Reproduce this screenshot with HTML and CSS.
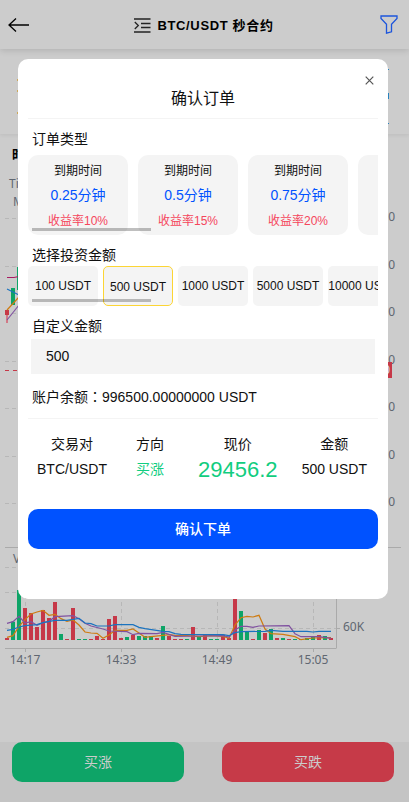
FILE: index.html
```html
<!DOCTYPE html>
<html lang="zh-CN">
<head>
<meta charset="utf-8">
<title>BTC/USDT 秒合约</title>
<link rel="stylesheet" href="styles.css">
</head>
<body>
<div class="page">
  <header class="topbar">
    <svg class="back" width="22" height="16" viewBox="0 0 22 16"><path d="M21 8H1M8 1.5 1 8l7 6.5"/></svg>
    <div class="pair">
      <svg class="list" width="17" height="15" viewBox="0 0 17 15"><path d="M0 1h16.500M7 5.500h9.500M7 9.500h9.500M0 14h16.500M.8 4l3.500 3.500L.8 11"/></svg>
      <h1>BTC/USDT 秒合约</h1>
    </div>
    <svg class="filter" width="18" height="19" viewBox="0 0 18 19"><path d="M1 1h16v2.500l-5.500 5.700v7.600l-5 1.400V9.200L1 3.500z"/></svg>
  </header>
  <section class="ticker">
    <svg width="409" height="84" viewBox="0 49 409 84"><path d="M17.500 79v2M17.500 90v2M17.500 112v2" stroke="#cda85a"/><path d="M388 69.500h1M388 123.500h1M388.500 93v6" stroke="#2781bd"/></svg>
  </section>
  <main class="chart">
    <svg width="409" height="608" viewBox="0 134 409 608">
      <text class="period" x="12" y="159">时分</text>
      <g class="axis">
        <text x="9" y="188">Time</text><text x="13" y="206">MA</text>
        <text x="395" y="221" text-anchor="end">29480.0</text><text x="395" y="269" text-anchor="end">29470.0</text>
        <text x="395" y="316" text-anchor="end">29460.0</text><text x="395" y="364" text-anchor="end">29450.0</text>
        <text x="395" y="411" text-anchor="end">29440.0</text><text x="395" y="459" text-anchor="end">29430.0</text>
        <text x="395" y="506" text-anchor="end">29420.0</text>
        <text x="13" y="563">VOL</text><text x="343" y="631">60K</text>
        <text x="25" y="664" text-anchor="middle">14:17</text><text x="121" y="664" text-anchor="middle">14:33</text>
        <text x="217" y="664" text-anchor="middle">14:49</text><text x="313" y="664" text-anchor="middle">15:05</text>
      </g>
      <path class="grid" d="M5 218.500h331M5 266.500h331M5 313.500h331M5 361.500h331M5 408.500h331M5 456.500h331M5 503.500h331M5 567.500h331M5 592.500h331M5 628.500h331M25.500 567v73M121.500 567v73M217.500 567v73M313.500 567v73"/>
      <path class="rule" d="M5 547.500h396M5 648.500h331.500M336.500 560v88M336 628.500h4M25.500 648v4M121.500 648v4M217.500 648v4M313.500 648v4"/>
      <path d="M5 370.500h331" stroke="#c63848" stroke-dasharray="4 4"/>
      <path d="M370 362h22v16h-22z" fill="#c63848"/><text class="last" x="390" y="374" text-anchor="end">29456.0</text>
      <path d="M7 310v13" stroke="#d27986" stroke-width="2"/><path d="M5 310h4v5H5z" fill="#c63848"/>
      <path d="M11 288h4v17h-4zM17 267h4v23h-4z" fill="#0ea467"/>
      <path class="ma purple" d="m7 320 12-15"/><path class="ma orange" d="m7 310 12-13"/><path class="ma blue" d="m7 289 12 6"/><path d="M7 277.500h7l5-1" class="ma pink"/>
      <g transform="translate(0 540) scale(.333333)">
        <path class="bar green" d="M39 300V245M57 300V150M183 300V282M237 300V297M255 300V297M381 300V291M417 300V288M435 300V288M453 300V288M489 300V258M561 300V297M597 300V288M633 300V297M651 300V297M723 300V213M741 300V274M777 300V270M813 300V267M849 300V294M885 300V297M921 300V294M939 300V291M975 300V288"/>
        <path class="bar red" d="M21 300V294M75 300V204M93 300V219M111 300V261M129 300V210M147 300V234M165 300V186M201 300V297M219 300V204M273 300V297M291 300V288M309 300V297M327 300V237M345 300V228M363 300V294M399 300V285M471 300V294M507 300V288M525 300V297M543 300V297M579 300V261M615 300V285M669 300V284M687 300V294M705 300V150M759 300V297M795 300V279M831 300V294M867 300V297M903 300V297M957 300V285M993 300V294"/>
        <path class="vol orange" d="M21 292 39 287 57 259 75 239 93 222 111 216 129 211 147 226 165 223 183 236 201 244 219 240 237 255 255 276 273 279 291 280 309 295 327 285 345 271 381 271 399 267 417 279 435 292 453 290 489 286 507 284 525 286 561 287 597 290 633 287 669 289 687 295 705 255 723 233 741 229 759 231 777 226 795 267 813 281 849 283 885 290 903 299 939 294 993 293"/>
        <path class="vol purple" d="M21 250 39 245 57 229 75 249 93 245 111 256 129 248 147 244 165 230 219 227 237 236 255 250 273 258 309 267 327 273 381 275 399 284 417 280 471 281 489 277 525 289 597 288 669 287 687 291 705 270 723 259 741 259 759 262 777 258 867 257 885 281 903 290 957 290 993 295"/>
        <path class="vol blue" d="M21 271 39 268 57 261 75 257 111 254 129 248 165 241 201 241 237 235 255 249 273 251 291 258 327 258 345 254 399 254 417 262 435 266 489 274 507 275 525 281 543 283 669 284 687 287 705 278 723 275 795 274 813 271 849 274 921 274 939 276 957 274 993 274"/>
      </g>
    </svg>
  </main>
  <footer class="actions"><button class="trade up">买涨</button><button class="trade down">买跌</button></footer>
</div>

<section class="dialog">
  <svg class="close" width="9" height="9" viewBox="0 0 9 9"><path d="m.7.7 7.600 7.600M8.300.7.700 8.300"/></svg>
  <h2>确认订单</h2>
  <h3>订单类型</h3>
  <div class="scroller terms">
    <div class="term"><span>到期时间</span><b>0.25分钟</b><i>收益率10%</i></div>
    <div class="term"><span>到期时间</span><b>0.5分钟</b><i>收益率15%</i></div>
    <div class="term"><span>到期时间</span><b>0.75分钟</b><i>收益率20%</i></div>
    <div class="term"><span>到期时间</span><b>1分钟</b><i>收益率25%</i></div>
  </div>
  <h3 class="invest">选择投资金额</h3>
  <div class="scroller amounts">
    <div class="amount">100 USDT</div><div class="amount selected">500 USDT</div><div class="amount">1000 USDT</div><div class="amount">5000 USDT</div><div class="amount">10000 USDT</div>
  </div>
  <h3 class="custom">自定义金额</h3>
  <div class="field">500</div>
  <p class="balance">账户余额<span class="colon" lang="zh-TW">：</span>996500.00000000 USDT</p>
  <div class="summary">
    <div><span>交易对</span><span>BTC/USDT</span></div>
    <div><span>方向</span><span class="gain">买涨</span></div>
    <div class="quote"><span>现价</span><span class="gain price">29456.2</span></div>
    <div><span>金额</span><span>500 USDT</span></div>
  </div>
  <button class="confirm">确认下单</button>
</section>
</body>
</html>
```
FILE: styles.css
```css
* { box-sizing: border-box; }
body { margin: 0; background: #fff; color: #111; font: 14px/20px "Liberation Sans", "Noto Sans CJK SC", sans-serif; overflow: hidden; }
h1, h2, h3, p { margin: 0; font-weight: 400; }
button { border: 0; padding: 0; font: inherit; }
svg { display: block; fill: none; }
.page { height: 802px; display: flex; flex-direction: column; background: #ccc; }

.topbar { position: relative; z-index: 1; height: 49px; flex: none; display: flex; align-items: center; justify-content: space-between; padding: 0 11px 0 8px; background: #ccc; box-shadow: 0 2px 6px rgba(0, 0, 0, .12); }
.back { stroke: #000; stroke-width: 1.3; }
.pair { display: flex; align-items: center; gap: 6px; padding: 2px 2px 0 0; }
.list { stroke: #222; stroke-width: 1.3; }
.pair h1 { color: #000; font-size: 13px; font-weight: 700; letter-spacing: .65px; white-space: nowrap; }
.filter { stroke: #1c55dc; stroke-width: 1.3; }
.ticker { height: 85px; flex: none; box-shadow: 0 1px 4px rgba(0, 0, 0, .08); }
.chart { height: 608px; flex: none; }
.chart text { fill: #606771; }
.axis { font: 12px "Noto Sans", sans-serif; }
.chart .period { fill: #000; font: 700 13px "Noto Sans CJK SC", sans-serif; }
.chart .last { fill: #ddd; font: 12px "Noto Sans", sans-serif; }
.grid { stroke: #b7b7b7; stroke-dasharray: 4 3; }
.rule { stroke: #aaa; }
.bar { stroke-width: 12; }
.bar.green { stroke: #0ea467; }
.bar.red { stroke: #c63848; }
.ma { stroke-width: 1.2; }
.vol { stroke-width: 3.6; }
.orange { stroke: #ce7b11; }
.purple { stroke: #8052a0; }
.blue { stroke: #1b73bf; }
.pink { stroke: #a71b61; }
.actions { height: 60px; display: flex; justify-content: space-between; padding: 0 15px 0 12px; background: #c4c4c4; }
.trade { width: 172px; height: 40px; border-radius: 10px; color: #ccc; }
.up { background: #0ea467; }
.down { background: #c63a48; }

.dialog { position: absolute; z-index: 2; left: 18px; top: 59px; width: 370px; height: 540px; padding: 0 10px; background: #fff; border-radius: 10px; }
.close { position: absolute; right: 14px; top: 17px; stroke: #555; stroke-width: 1.2; }
.dialog h2 { height: 60px; padding-top: 30px; font-size: 16px; text-align: center; border-bottom: 1px solid #f4f4f4; }
.dialog h3 { font-size: 14px; line-height: 20px; padding: 10px 0 0 4px; height: 36px; }
.scroller { position: relative; display: flex; overflow: hidden; }
.scroller::after { content: ""; position: absolute; left: 4px; width: 119px; height: 3px; background: rgba(0, 0, 0, .25); }
.terms { gap: 10px; height: 80px; }
.terms::after { bottom: 4px; }
.term { flex: 0 0 100px; height: 80px; padding-top: 6px; display: flex; flex-direction: column; align-items: center; background: #f4f4f4; border-radius: 10px; font-size: 12px; white-space: nowrap; }
.term b { font-size: 14px; font-weight: 400; line-height: 28px; margin-bottom: 2px; color: #0052ff; }
.term i { font-style: normal; color: #f5465c; }
.dialog .invest { height: 31px; }
.amounts { gap: 5px; height: 40px; }
.amounts::after { bottom: 4px; }
.amount { flex: 0 0 70px; height: 40px; line-height: 41px; text-align: center; font-size: 12px; white-space: nowrap; background: #f4f4f4; border-radius: 5px; }
.amount.selected { border: 1px solid #fcd535; }
.dialog .custom { height: 33px; }
.field { height: 35px; margin: 0 3px; padding-left: 15px; line-height: 35px; background: #f4f4f4; }
.balance { height: 45px; padding: 13px 0 0 4px; border-bottom: 1px solid #f4f4f4; }
.colon { font-family: "Noto Sans CJK TC", sans-serif; line-height: 1; }
.summary { height: 90px; display: flex; justify-content: space-between; padding: 13px 11px 0 9px; }
.summary div { display: flex; flex-direction: column; align-items: center; line-height: 25px; white-space: nowrap; }
.summary .quote { margin: 0 -5px 0 5px; }
.gain { color: #11cd80; }
.price { font-size: 22px; }
.confirm { display: block; width: 350px; height: 40px; border-radius: 10px; color: #fff; font-weight: 500; background: #0052ff; }
```
